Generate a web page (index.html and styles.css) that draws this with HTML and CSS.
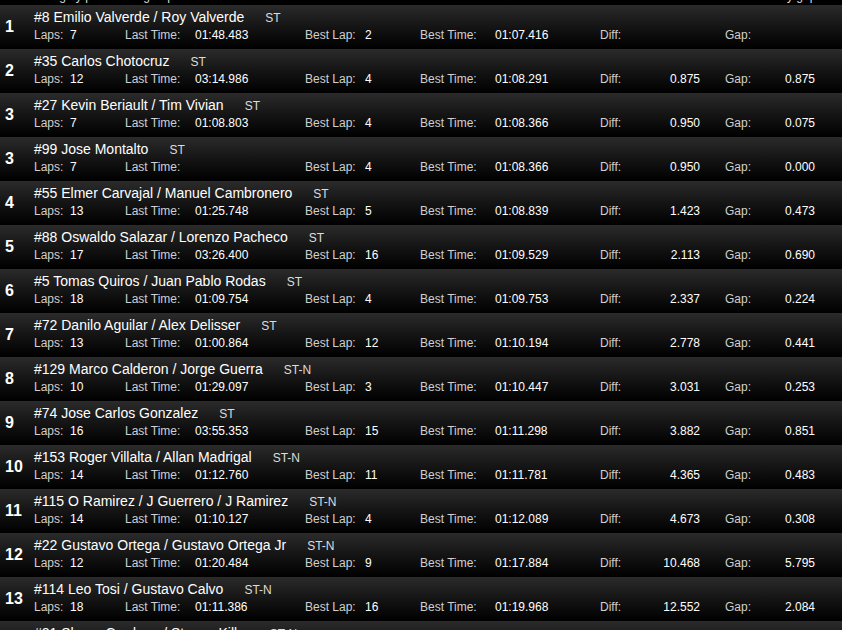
FILE: index.html
```html
<!DOCTYPE html>
<html>
<head>
<meta charset="utf-8">
<link rel="stylesheet" href="styles.css">
</head>
<body>
<div class="topbar"><span class="top-left">Viewing by position of group</span><span class="top-right">Sort by gap</span></div>
<div class="list">
  <div class="row"><div class="pos">1</div><div class="info"><div class="name">#8 Emilio Valverde / Roy Valverde<span class="cls">ST</span></div>
    <div class="stats"><span class="lbl">Laps:</span><span class="val">7</span><span class="lbl">Last Time:</span><span class="val">01:48.483</span><span class="lbl">Best Lap:</span><span class="val">2</span><span class="lbl">Best Time:</span><span class="val">01:07.416</span><span class="lbl">Diff:</span><span class="val num"></span><span class="lbl gap">Gap:</span><span class="val num"></span></div></div></div>
  <div class="row"><div class="pos">2</div><div class="info"><div class="name">#35 Carlos Chotocruz<span class="cls">ST</span></div>
    <div class="stats"><span class="lbl">Laps:</span><span class="val">12</span><span class="lbl">Last Time:</span><span class="val">03:14.986</span><span class="lbl">Best Lap:</span><span class="val">4</span><span class="lbl">Best Time:</span><span class="val">01:08.291</span><span class="lbl">Diff:</span><span class="val num">0.875</span><span class="lbl gap">Gap:</span><span class="val num">0.875</span></div></div></div>
  <div class="row"><div class="pos">3</div><div class="info"><div class="name">#27 Kevin Beriault / Tim Vivian<span class="cls">ST</span></div>
    <div class="stats"><span class="lbl">Laps:</span><span class="val">7</span><span class="lbl">Last Time:</span><span class="val">01:08.803</span><span class="lbl">Best Lap:</span><span class="val">4</span><span class="lbl">Best Time:</span><span class="val">01:08.366</span><span class="lbl">Diff:</span><span class="val num">0.950</span><span class="lbl gap">Gap:</span><span class="val num">0.075</span></div></div></div>
  <div class="row"><div class="pos">3</div><div class="info"><div class="name">#99 Jose Montalto<span class="cls">ST</span></div>
    <div class="stats"><span class="lbl">Laps:</span><span class="val">7</span><span class="lbl">Last Time:</span><span class="val"></span><span class="lbl">Best Lap:</span><span class="val">4</span><span class="lbl">Best Time:</span><span class="val">01:08.366</span><span class="lbl">Diff:</span><span class="val num">0.950</span><span class="lbl gap">Gap:</span><span class="val num">0.000</span></div></div></div>
  <div class="row"><div class="pos">4</div><div class="info"><div class="name">#55 Elmer Carvajal / Manuel Cambronero<span class="cls">ST</span></div>
    <div class="stats"><span class="lbl">Laps:</span><span class="val">13</span><span class="lbl">Last Time:</span><span class="val">01:25.748</span><span class="lbl">Best Lap:</span><span class="val">5</span><span class="lbl">Best Time:</span><span class="val">01:08.839</span><span class="lbl">Diff:</span><span class="val num">1.423</span><span class="lbl gap">Gap:</span><span class="val num">0.473</span></div></div></div>
  <div class="row"><div class="pos">5</div><div class="info"><div class="name">#88 Oswaldo Salazar / Lorenzo Pacheco<span class="cls">ST</span></div>
    <div class="stats"><span class="lbl">Laps:</span><span class="val">17</span><span class="lbl">Last Time:</span><span class="val">03:26.400</span><span class="lbl">Best Lap:</span><span class="val">16</span><span class="lbl">Best Time:</span><span class="val">01:09.529</span><span class="lbl">Diff:</span><span class="val num">2.113</span><span class="lbl gap">Gap:</span><span class="val num">0.690</span></div></div></div>
  <div class="row"><div class="pos">6</div><div class="info"><div class="name">#5 Tomas Quiros / Juan Pablo Rodas<span class="cls">ST</span></div>
    <div class="stats"><span class="lbl">Laps:</span><span class="val">18</span><span class="lbl">Last Time:</span><span class="val">01:09.754</span><span class="lbl">Best Lap:</span><span class="val">4</span><span class="lbl">Best Time:</span><span class="val">01:09.753</span><span class="lbl">Diff:</span><span class="val num">2.337</span><span class="lbl gap">Gap:</span><span class="val num">0.224</span></div></div></div>
  <div class="row"><div class="pos">7</div><div class="info"><div class="name">#72 Danilo Aguilar / Alex Delisser<span class="cls">ST</span></div>
    <div class="stats"><span class="lbl">Laps:</span><span class="val">13</span><span class="lbl">Last Time:</span><span class="val">01:00.864</span><span class="lbl">Best Lap:</span><span class="val">12</span><span class="lbl">Best Time:</span><span class="val">01:10.194</span><span class="lbl">Diff:</span><span class="val num">2.778</span><span class="lbl gap">Gap:</span><span class="val num">0.441</span></div></div></div>
  <div class="row"><div class="pos">8</div><div class="info"><div class="name">#129 Marco Calderon / Jorge Guerra<span class="cls">ST-N</span></div>
    <div class="stats"><span class="lbl">Laps:</span><span class="val">10</span><span class="lbl">Last Time:</span><span class="val">01:29.097</span><span class="lbl">Best Lap:</span><span class="val">3</span><span class="lbl">Best Time:</span><span class="val">01:10.447</span><span class="lbl">Diff:</span><span class="val num">3.031</span><span class="lbl gap">Gap:</span><span class="val num">0.253</span></div></div></div>
  <div class="row"><div class="pos">9</div><div class="info"><div class="name">#74 Jose Carlos Gonzalez<span class="cls">ST</span></div>
    <div class="stats"><span class="lbl">Laps:</span><span class="val">16</span><span class="lbl">Last Time:</span><span class="val">03:55.353</span><span class="lbl">Best Lap:</span><span class="val">15</span><span class="lbl">Best Time:</span><span class="val">01:11.298</span><span class="lbl">Diff:</span><span class="val num">3.882</span><span class="lbl gap">Gap:</span><span class="val num">0.851</span></div></div></div>
  <div class="row"><div class="pos">10</div><div class="info"><div class="name">#153 Roger Villalta / Allan Madrigal<span class="cls">ST-N</span></div>
    <div class="stats"><span class="lbl">Laps:</span><span class="val">14</span><span class="lbl">Last Time:</span><span class="val">01:12.760</span><span class="lbl">Best Lap:</span><span class="val">11</span><span class="lbl">Best Time:</span><span class="val">01:11.781</span><span class="lbl">Diff:</span><span class="val num">4.365</span><span class="lbl gap">Gap:</span><span class="val num">0.483</span></div></div></div>
  <div class="row"><div class="pos">11</div><div class="info"><div class="name">#115 O Ramirez / J Guerrero / J Ramirez<span class="cls">ST-N</span></div>
    <div class="stats"><span class="lbl">Laps:</span><span class="val">14</span><span class="lbl">Last Time:</span><span class="val">01:10.127</span><span class="lbl">Best Lap:</span><span class="val">4</span><span class="lbl">Best Time:</span><span class="val">01:12.089</span><span class="lbl">Diff:</span><span class="val num">4.673</span><span class="lbl gap">Gap:</span><span class="val num">0.308</span></div></div></div>
  <div class="row"><div class="pos">12</div><div class="info"><div class="name">#22 Gustavo Ortega / Gustavo Ortega Jr<span class="cls">ST-N</span></div>
    <div class="stats"><span class="lbl">Laps:</span><span class="val">12</span><span class="lbl">Last Time:</span><span class="val">01:20.484</span><span class="lbl">Best Lap:</span><span class="val">9</span><span class="lbl">Best Time:</span><span class="val">01:17.884</span><span class="lbl">Diff:</span><span class="val num">10.468</span><span class="lbl gap">Gap:</span><span class="val num">5.795</span></div></div></div>
  <div class="row"><div class="pos">13</div><div class="info"><div class="name">#114 Leo Tosi / Gustavo Calvo<span class="cls">ST-N</span></div>
    <div class="stats"><span class="lbl">Laps:</span><span class="val">18</span><span class="lbl">Last Time:</span><span class="val">01:11.386</span><span class="lbl">Best Lap:</span><span class="val">16</span><span class="lbl">Best Time:</span><span class="val">01:19.968</span><span class="lbl">Diff:</span><span class="val num">12.552</span><span class="lbl gap">Gap:</span><span class="val num">2.084</span></div></div></div>
  <div class="row"><div class="pos">14</div><div class="info"><div class="name">#21 Shane Cardona / Steven Kilby<span class="cls">ST-N</span></div>
    <div class="stats"><span class="lbl">Laps:</span><span class="val">15</span><span class="lbl">Last Time:</span><span class="val">01:13.205</span><span class="lbl">Best Lap:</span><span class="val">6</span><span class="lbl">Best Time:</span><span class="val">01:20.114</span><span class="lbl">Diff:</span><span class="val num">12.698</span><span class="lbl gap">Gap:</span><span class="val num">0.146</span></div></div></div>
</div>
</body>
</html>
```

FILE: styles.css
```css
html, body {
  margin: 0;
  padding: 0;
  background: #000;
  overflow: hidden;
}
body {
  width: 842px;
  height: 630px;
  font-family: "Liberation Sans", Arial, sans-serif;
  color: #fff;
}
.topbar {
  height: 5px;
  overflow: hidden;
  position: relative;
  font-size: 12px;
  color: #ddd;
}
.topbar span {
  position: absolute;
  bottom: 2px;
  line-height: 14px;
}
.top-left { left: 24px; }
.top-right { left: 755px; }
.list {
  display: flex;
  flex-direction: column;
}
.row {
  height: 44px;
  flex: none;
  display: flex;
  align-items: center;
  background: linear-gradient(to bottom, #2b2b2b 0%, #141414 50%, #000 100%);
}
.pos {
  width: 29px;
  padding-left: 5px;
  font-size: 16px;
  font-weight: bold;
  line-height: 18px;
}
.info {
  display: flex;
  flex-direction: column;
  gap: 2px;
  align-self: flex-start;
  padding-top: 4px;
}
.name {
  font-size: 14px;
  line-height: 16px;
  white-space: nowrap;
  color: #fff;
}
.cls {
  font-size: 12px;
  color: #ddd;
  margin-left: 21px;
}
.stats {
  display: grid;
  grid-template-columns: 36px 55px 70px 110px 60px 55px 75px 105px 40px 60px 75px 40px;
  font-size: 12px;
  line-height: 14px;
  white-space: nowrap;
}
.lbl {
  color: #d0d0d0;
}
.val {
  color: #fff;
}
.num {
  text-align: right;
}
.gap {
  padding-left: 25px;
}
```
